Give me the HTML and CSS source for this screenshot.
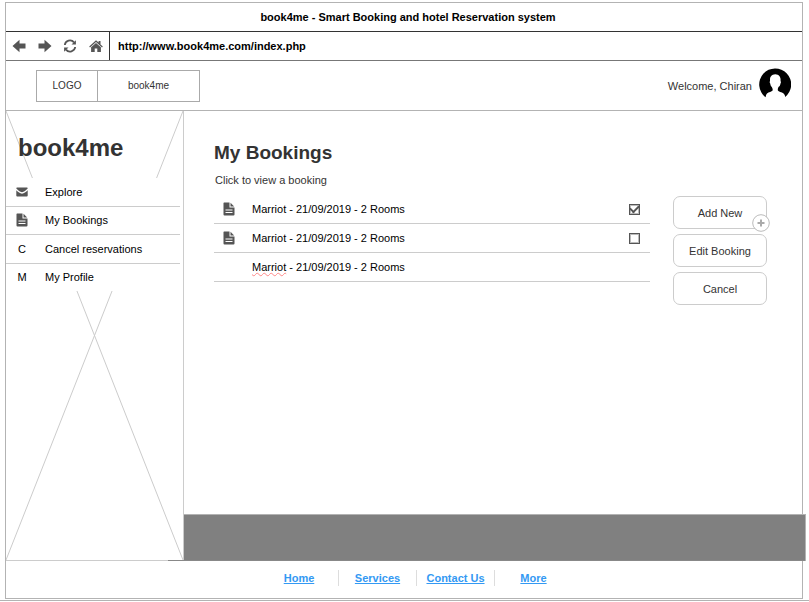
FILE: index.html
```html
<!DOCTYPE html>
<html lang="en">
<head>
<meta charset="utf-8">
<title>book4me - Smart Booking and hotel Reservation system</title>
<meta name="viewport" content="width=device-width, initial-scale=1">
<link rel="stylesheet" href="styles.css">
</head>
<body>
<svg class="defs" aria-hidden="true">
  <symbol id="doc" viewBox="0 0 12 14">
    <path d="M1 .5H6.500V5.500H11.500V12.500Q11.500 13.500 10.500 13.500H1.500Q.5 13.500.5 12.500V1Z"/>
    <path d="M7.500 .8L11.200 4.500H7.500Z"/>
    <path d="M2.500 8H9.500M2.500 10.500H9.500" stroke="#fff" fill="none"/>
  </symbol>
</svg>
<div class="window">
  <div class="titlebar">book4me - Smart Booking and hotel Reservation system</div>
  <div class="toolbar">
    <div class="nav">
      <button type="button" aria-label="Back"><svg viewBox="0 0 14 14"><path d="M.5 7L7.500 .8V4.600H13.500V9.400H7.500V13.200Z"/></svg></button>
      <button type="button" aria-label="Forward"><svg viewBox="0 0 14 14"><path d="M13.500 7L6.500 .8V4.600H.5V9.400H6.500V13.200Z"/></svg></button>
      <button type="button" aria-label="Reload"><svg viewBox="0 0 14 14"><path d="M1.800 6A5.200 5.200 0 0 1 11 3.400M12.200 8A5.200 5.200 0 0 1 3 10.600" fill="none" stroke="#555" stroke-width="1.800"/><path d="M12.900 1.200V5.600H8.500ZM1.100 12.800V8.400H5.500Z"/></svg></button>
      <button type="button" aria-label="Home page"><svg viewBox="0 0 14 14"><path d="M7 1.200L9.600 3.600V2H11.500V5.400L13.800 7.500L13 8.400L7 3.100L1 8.400L.2 7.500Z"/><path d="M7 3.900L11.900 8.300V12.900H8.300V9.500H5.700V12.900H2.100V8.300Z"/></svg></button>
    </div>
    <input class="address" type="text" aria-label="Address" value="http://www.book4me.com/index.php">
  </div>
  <header class="header">
    <div class="brand"><span class="logo">LOGO</span><span class="name">book4me</span></div>
    <div class="user">
      <span>Welcome, Chiran</span>
      <svg viewBox="0 0 32 32" aria-hidden="true"><path d="M6.600 29.200A16 16 0 1 1 26.200 28.900Q26.100 26.800 24.600 25.500C22.800 24.100 19.400 23.700 18.900 22.500C18.600 21.200 18.900 20 19.700 18.800C21 18.200 21.200 16.800 21.500 15.500C22.200 14.800 21.900 13.500 21.500 13C22 9.500 20.500 6.500 16.300 6.300C12 6.500 10.600 9.500 11.100 13C10.500 13.500 10.500 14.800 11.200 15.500C11.500 16.800 11.700 18.200 12.800 18.900C13.600 20.200 13.900 21.400 13.600 22.600C12.800 23.800 9.600 24.200 8 25.600Q6.800 26.900 6.600 29.200Z"/></svg>
    </div>
  </header>
  <div class="content">
    <aside class="sidebar">
      <svg class="cross" viewBox="0 0 100 100" preserveAspectRatio="none" aria-hidden="true"><path d="M0 0L100 100M100 0L0 100"/></svg>
      <h2>book4me</h2>
      <ul class="menu">
        <li><a href="#"><span class="mark"><svg class="mail" viewBox="0 0 12 10"><path d="M1 .5H11Q11.700.5 11.700 1.500C10 3.500 8 4.800 6 5.300C4 4.800 2 3.500.3 1.500Q.3.5 1 .5ZM.3 3.200C2 5 4 6.400 6 6.700C8 6.400 10 5 11.700 3.200V8.600Q11.700 9.500 10.800 9.500H1.200Q.3 9.500.3 8.600Z"/></svg></span>Explore</a></li>
        <li><a href="#"><span class="mark"><svg class="doc"><use href="#doc"/></svg></span>My Bookings</a></li>
        <li><a href="#"><span class="mark">C</span>Cancel reservations</a></li>
        <li><a href="#"><span class="mark">M</span>My Profile</a></li>
      </ul>
    </aside>
    <div class="page">
      <main class="main">
        <h1>My Bookings</h1>
        <p>Click to view a booking</p>
        <div class="columns">
          <ul class="bookings">
            <li><span class="mark"><svg class="doc"><use href="#doc"/></svg></span><label for="b1">Marriot - 21/09/2019 - 2 Rooms</label><input type="checkbox" id="b1" checked></li>
            <li><span class="mark"><svg class="doc"><use href="#doc"/></svg></span><label for="b2">Marriot - 21/09/2019 - 2 Rooms</label><input type="checkbox" id="b2"></li>
            <li><span class="mark"></span><span class="text"><span class="typo">Marriot</span> - 21/09/2019 - 2 Rooms</span></li>
          </ul>
          <div class="actions">
            <button type="button">Add New<svg class="plus" viewBox="0 0 18 18" aria-hidden="true"><circle cx="9" cy="9" r="8.300"/><path d="M9 5.500V12.500M5.500 9H12.500"/></svg></button>
            <button type="button">Edit Booking</button>
            <button type="button">Cancel</button>
          </div>
        </div>
      </main>
      <div class="band"></div>
    </div>
  </div>
  <footer class="footer">
    <nav class="links">
      <a href="#">Home</a><a href="#">Services</a><a href="#">Contact Us</a><a href="#">More</a>
    </nav>
  </footer>
</div>
</body>
</html>
```
FILE: styles.css
```css
* { box-sizing: border-box; }

body {
  margin: 0;
  min-height: 100vh;
  padding: 2px 6px 1px 5px;
  display: flex;
  flex-direction: column;
  font: 11px/16px "Liberation Sans", Arial, sans-serif;
  color: #000;
  background: #fff;
}

body::after {
  content: "";
  height: 1px;
  margin: 1px -6px 0 -5px;
  background: #b3b3b3;
}

button, input { font: inherit; color: inherit; }
ul { list-style: none; margin: 0; padding: 0; }
svg { fill: #555; display: block; }
.defs { position: absolute; width: 0; height: 0; }

.window {
  flex: 1;
  display: flex;
  flex-direction: column;
  border: 1px solid #b3b3b3;
}

.titlebar {
  height: 29px;
  line-height: 28px;
  text-align: center;
  font-weight: bold;
  padding-left: 8px;
  border-bottom: 1px solid #333;
}

.toolbar {
  display: flex;
  height: 29px;
  border-bottom: 1px solid #777;
}

.nav {
  display: flex;
  align-items: center;
  width: 104px;
  border-right: 1px solid #333;
}

.nav button {
  flex: 1;
  display: grid;
  place-items: center;
  padding: 0;
  border: 0;
  background: none;
}

.nav svg { width: 14px; height: 14px; }

.address {
  flex: 1;
  min-width: 0;
  border: 0;
  padding: 0 8px;
  font-weight: bold;
  background: none;
}

.header {
  display: flex;
  align-items: center;
  justify-content: space-between;
  height: 50px;
  padding: 0 11px 0 30px;
  border-bottom: 1px solid #b3b3b3;
}

.brand {
  display: flex;
  border: 1px solid #aaa;
  font-size: 10px;
  line-height: 30px;
  text-align: center;
  color: #333;
}

.logo { width: 61px; border-right: 1px solid #aaa; }
.name { width: 101px; }

.user {
  display: flex;
  align-items: center;
  gap: 7px;
  color: #333;
}

.user svg { width: 32px; height: 32px; fill: #000; margin-bottom: 4px; }

.content { flex: 1; display: flex; }

.sidebar {
  position: relative;
  width: 178px;
  border-right: 1px solid #ccc;
  border-bottom: 1px solid #ccc;
}

.cross {
  position: absolute;
  inset: 0;
  width: 100%;
  height: 100%;
  fill: none;
  stroke: #ccc;
}

.cross path { vector-effect: non-scaling-stroke; }

.sidebar h2 {
  position: relative;
  margin: 0;
  padding: 23px 12px 16px;
  font-size: 24px;
  line-height: 28px;
  color: #333;
}

.menu {
  position: relative;
  display: flex;
  flex-direction: column;
  height: 113px;
  margin-right: 3px;
  background: #fff;
}

.menu li { flex: 1; display: flex; }
.menu li + li { border-top: 1px solid #ccc; }

.menu a {
  display: flex;
  align-items: center;
  color: inherit;
  text-decoration: none;
}

.mark { display: flex; justify-content: center; }
.menu .mark { width: 32px; margin-right: 7px; }
.mail { width: 12px; height: 10px; }
.doc { width: 12px; height: 14px; }

.page {
  flex: 1;
  min-width: 0;
  display: flex;
  flex-direction: column;
}

.main { flex: 1; padding: 30px 35px 20px 30px; }

h1 {
  margin: 0 0 7px;
  font-size: 19px;
  line-height: 24px;
  color: #333;
}

.main p { margin: 0 0 7px 1px; color: #333; }
.columns { display: flex; gap: 23px; }
.bookings { flex: 1; }

.bookings li {
  display: flex;
  align-items: center;
  height: 29px;
  padding-right: 10px;
  border-bottom: 1px solid #ccc;
}

.bookings .mark { width: 30px; margin-right: 8px; }
.bookings label { flex: 1; }

.typo {
  text-decoration: underline wavy #f88 1px;
  text-decoration-skip-ink: none;
  text-underline-offset: 1px;
}

.bookings input {
  appearance: none;
  width: 11px;
  height: 11px;
  margin: 0;
  border: 1px solid #555;
  outline: 1px solid #bbb;
  outline-offset: -2px;
  display: grid;
  place-items: center;
}

.bookings input:checked::before {
  content: "";
  width: 7px;
  height: 4px;
  margin-bottom: 2px;
  border: solid #555;
  border-width: 0 0 2px 2px;
  transform: rotate(-45deg);
}

.actions {
  display: flex;
  flex-direction: column;
  gap: 5px;
  padding-top: 1px;
}

.actions button {
  position: relative;
  width: 94px;
  height: 33px;
  padding: 0;
  border: 1px solid #ccc;
  border-radius: 7px;
  background: #fff;
  color: #333;
}

.plus {
  position: absolute;
  right: -4px;
  bottom: -4px;
  z-index: 1;
  width: 18px;
  height: 18px;
  fill: #fff;
  stroke: #bbb;
}

.plus path { stroke: #aaa; stroke-width: 2; }

.band {
  position: relative;
  height: 47px;
  margin-right: -4px;
  background: #808080;
  border: solid #b3b3b3;
  border-width: 1px 1px 0 0;
}

.band::after {
  content: "";
  position: absolute;
  left: -16px;
  right: 0;
  bottom: 0;
  height: 1px;
  background: #888;
}

.footer {
  display: flex;
  justify-content: center;
  padding: 9px 0 12px 24px;
}

.links { display: flex; }

.links a {
  width: 78px;
  text-align: center;
  font-weight: bold;
  color: #3399f3;
}

.links a + a { border-left: 1px solid #ddd; }
```
